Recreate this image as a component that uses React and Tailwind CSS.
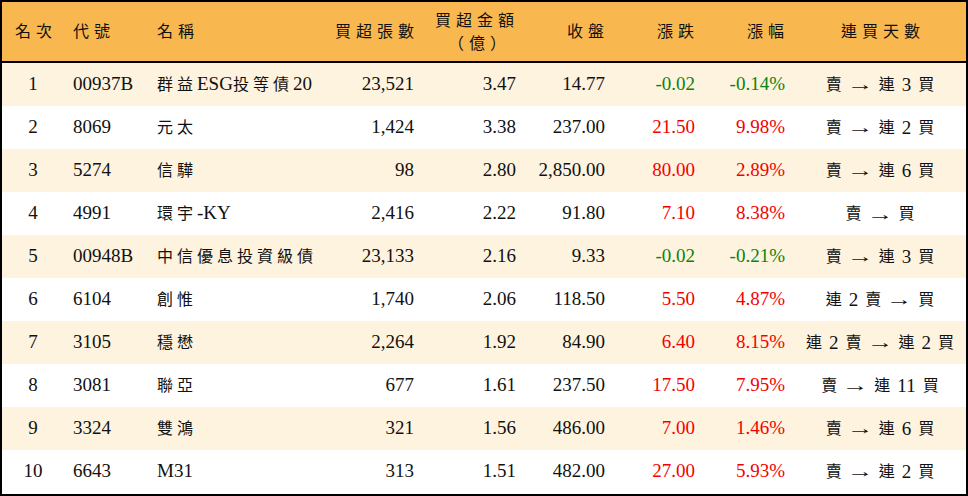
import React from "react";

const rows = [
  { rank: 1, code: "00937B", name: "群益ESG投等債20", vol: "23,521", amt: "3.47", close: "14.77", chg: "-0.02", pct: "-0.14%", streak: "賣 → 連 3 買" },
  { rank: 2, code: "8069", name: "元太", vol: "1,424", amt: "3.38", close: "237.00", chg: "21.50", pct: "9.98%", streak: "賣 → 連 2 買" },
  { rank: 3, code: "5274", name: "信驊", vol: "98", amt: "2.80", close: "2,850.00", chg: "80.00", pct: "2.89%", streak: "賣 → 連 6 買" },
  { rank: 4, code: "4991", name: "環宇-KY", vol: "2,416", amt: "2.22", close: "91.80", chg: "7.10", pct: "8.38%", streak: "賣 → 買" },
  { rank: 5, code: "00948B", name: "中信優息投資級債", vol: "23,133", amt: "2.16", close: "9.33", chg: "-0.02", pct: "-0.21%", streak: "賣 → 連 3 買" },
  { rank: 6, code: "6104", name: "創惟", vol: "1,740", amt: "2.06", close: "118.50", chg: "5.50", pct: "4.87%", streak: "連 2 賣 → 買" },
  { rank: 7, code: "3105", name: "穩懋", vol: "2,264", amt: "1.92", close: "84.90", chg: "6.40", pct: "8.15%", streak: "連 2 賣 → 連 2 買" },
  { rank: 8, code: "3081", name: "聯亞", vol: "677", amt: "1.61", close: "237.50", chg: "17.50", pct: "7.95%", streak: "賣 → 連 11 買" },
  { rank: 9, code: "3324", name: "雙鴻", vol: "321", amt: "1.56", close: "486.00", chg: "7.00", pct: "1.46%", streak: "賣 → 連 6 買" },
  { rank: 10, code: "6643", name: "M31", vol: "313", amt: "1.51", close: "482.00", chg: "27.00", pct: "5.93%", streak: "賣 → 連 2 買" },
];

const CJK = /[\u3400-\u9fff\uff08\uff09]/;

// CJK runs get smaller glyphs with wider spacing, latin/digits stay tight
function T({ s, head }) {
  const parts = s.split(/([\u3400-\u9fff\uff08\uff09]+)/);
  return (
    <>
      {parts.map((p, i) =>
        CJK.test(p) ? (
          <span key={i} className={`text-[16px] ${head ? "tracking-[5px]" : "tracking-[4px]"}`}>
            {p}
          </span>
        ) : (
          <span key={i}>{p}</span>
        )
      )}
    </>
  );
}

function Streak({ s }) {
  return (
    <span className="inline-flex items-center gap-[7px]">
      {s.split(" ").map((t, i) =>
        t === "→" ? (
          <span key={i} className="inline-block scale-x-[1.55] mx-[3px] text-[17px]">→</span>
        ) : CJK.test(t) ? (
          <span key={i} className="text-[16px]">{t}</span>
        ) : (
          <span key={i}>{t}</span>
        )
      )}
    </span>
  );
}

const cols = "grid grid-cols-[62px_86px_170px_104px_100px_90px_90px_90px_1fr] items-center";

export default function App() {
  return (
    <div
      className="w-[968px] h-[496px] border-2 border-black bg-white text-[#111] overflow-hidden"
      style={{ fontFamily: '"Liberation Serif", "Noto Sans CJK TC", serif' }}
    >
      <div className={`${cols} h-[61px] bg-[#f9b84f] border-b-2 border-black text-[19px]`}>
        <div className="text-center pl-[6px]"><T head s="名次" /></div>
        <div className="pl-[9px]"><T head s="代號" /></div>
        <div className="pl-[7px]"><T head s="名稱" /></div>
        <div className="text-right pr-[5px]"><T head s="買超張數" /></div>
        <div className="text-right pr-[5px] leading-[22px]">
          <div><T head s="買超金額" /></div>
          <div className="pr-[8px]"><T head s="（億）" /></div>
        </div>
        <div className="text-right pr-[5px]"><T head s="收盤" /></div>
        <div className="text-right pr-[5px]"><T head s="漲跌" /></div>
        <div className="text-right pr-[5px]"><T head s="漲幅" /></div>
        <div className="text-center pl-[6px]"><T head s="連買天數" /></div>
      </div>

      {rows.map((r, i) => {
        const color = r.chg.startsWith("-") ? "text-[#0a850f]" : "text-[#f50000]";
        return (
          <div
            key={r.rank}
            className={`${cols} h-[43px] text-[19px] ${i % 2 === 0 ? "bg-[#fef3df]" : "bg-white"}`}
          >
            <div className="text-center">{r.rank}</div>
            <div className="pl-[9px]">{r.code}</div>
            <div className="pl-[7px] whitespace-nowrap"><T s={r.name} /></div>
            <div className="text-right pr-[10px]">{r.vol}</div>
            <div className="text-right pr-[8px]">{r.amt}</div>
            <div className="text-right pr-[9px]">{r.close}</div>
            <div className={`text-right pr-[9px] ${color}`}>{r.chg}</div>
            <div className={`text-right pr-[9px] ${color}`}>{r.pct}</div>
            <div className="text-center whitespace-nowrap"><Streak s={r.streak} /></div>
          </div>
        );
      })}
    </div>
  );
}
